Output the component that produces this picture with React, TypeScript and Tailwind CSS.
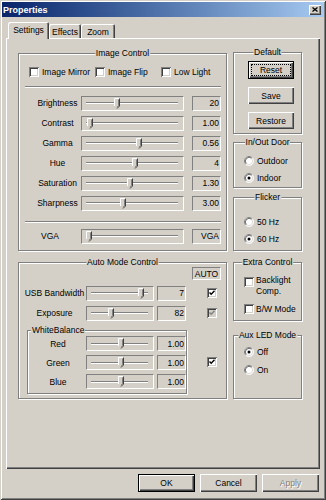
import React from 'react'

type Kids = { children?: React.ReactNode }

function Group({ title, left, className = '', children }: { title: string; left?: boolean; className?: string } & Kids) {
  return (
    <div className={`relative shrink-0 border border-[#808080] shadow-[inset_1px_1px_0_#fff,1px_1px_0_#fff] ${className}`}>
      <span
        className={`absolute top-[-6px] bg-[#d4d0c8] px-[1px] leading-[10px] whitespace-nowrap ${
          left ? 'left-[3px]' : 'left-1/2 -translate-x-1/2'
        }`}
      >
        {title}
      </span>
      {children}
    </div>
  )
}

function Check({ checked, disabled, className = '' }: { checked?: boolean; disabled?: boolean; className?: string }) {
  return (
    <div
      className={`w-[10px] h-[10px] shrink-0 flex items-center justify-center shadow-[inset_1px_1px_0_#808080,inset_-1px_-1px_0_#fff,inset_2px_2px_0_#404040,inset_-2px_-2px_0_#d4d0c8] ${
        disabled ? 'bg-[#d4d0c8]' : 'bg-white'
      } ${className}`}
    >
      {checked && (
        <svg width="6" height="6" viewBox="0 0 6 6">
          <path d="M0.5 2.5 L2.2 4.3 L5.5 0.8" stroke={disabled ? '#808080' : '#000'} strokeWidth="1.4" fill="none" />
        </svg>
      )}
    </div>
  )
}

function Radio({ on }: { on?: boolean }) {
  return (
    <svg width="10" height="10" viewBox="0 0 12 12" className="shrink-0">
      <circle cx="6" cy="6" r="5.5" fill="#fff" />
      <path d="M2.11 9.89 A5.5 5.5 0 0 1 9.89 2.11" stroke="#808080" fill="none" />
      <path d="M9.89 2.11 A5.5 5.5 0 0 1 2.11 9.89" stroke="#fff" fill="none" />
      <path d="M2.82 9.18 A4.5 4.5 0 0 1 9.18 2.82" stroke="#404040" fill="none" />
      <path d="M9.18 2.82 A4.5 4.5 0 0 1 2.82 9.18" stroke="#d4d0c8" fill="none" />
      {on && <circle cx="6" cy="6" r="1.8" fill="#000" />}
    </svg>
  )
}

function Track({ w, at }: { w: string; at: number }) {
  return (
    <div
      className={`relative h-[15px] shrink-0 flex items-center pl-[4px] pr-[5px] border border-t-[#808080] border-l-[#808080] border-b-white border-r-white ${w}`}
    >
      <div className="flex-1 h-[2px] border-t border-t-[#808080] border-b border-b-white" />
      <svg className="absolute top-[1px]" style={{ left: at - 4 }} width="6" height="11" viewBox="0 0 6 11">
        <polygon points="0,0 6,0 6,8 3,11 0,8" fill="#d4d0c8" />
        <polyline points="0.5,8 0.5,0.5 5.5,0.5" stroke="#fff" fill="none" />
        <polyline points="5.5,0.5 5.5,8 3,10.5" stroke="#404040" fill="none" />
        <polyline points="4.5,1.5 4.5,7.6 3,9.2" stroke="#808080" fill="none" />
      </svg>
    </div>
  )
}

function Value({ className = '', children }: { className?: string } & Kids) {
  return (
    <div
      className={`h-[15px] w-[29px] shrink-0 flex items-center justify-end pr-[1px] border border-t-[#808080] border-l-[#808080] border-b-white border-r-white ${className}`}
    >
      {children}
    </div>
  )
}

function Btn({
  label,
  def,
  focus,
  disabled,
  className = '',
}: {
  label: string
  def?: boolean
  focus?: boolean
  disabled?: boolean
  className?: string
}) {
  return (
    <div
      className={`relative shrink-0 flex items-center justify-center bg-[#d4d0c8] shadow-[inset_1px_1px_0_#fff,inset_-1px_-1px_0_#404040,inset_-2px_-2px_0_#808080] ${
        def ? 'border border-black' : ''
      } ${className}`}
    >
      {focus && <div className="absolute inset-[2px] border border-dotted border-black" />}
      <span className={disabled ? 'text-[#808080] [text-shadow:1px_1px_0_#fff]' : ''}>{label}</span>
    </div>
  )
}

function Rule({ className = '' }: { className?: string }) {
  return <div className={`h-[2px] border-t border-t-[#808080] border-b border-b-white ${className}`} />
}

const sliders = [
  { label: 'Brightness', value: '20', at: 36 },
  { label: 'Contrast', value: '1.00', at: 9 },
  { label: 'Gamma', value: '0.56', at: 58 },
  { label: 'Hue', value: '4', at: 54 },
  { label: 'Saturation', value: '1.30', at: 49 },
  { label: 'Sharpness', value: '3.00', at: 42 },
]

const balance = [
  { label: 'Red', at: 35 },
  { label: 'Green', at: 35 },
  { label: 'Blue', at: 35 },
]

export default function App() {
  return (
    <div className="w-[326px] h-[500px] flex flex-col bg-[#d4d0c8] text-black text-[8.5px] leading-[10px] font-['Liberation_Sans',Arial,sans-serif] shadow-[inset_1px_1px_0_#d4d0c8,inset_-1px_-1px_0_#404040,inset_2px_2px_0_#fff,inset_-2px_-2px_0_#808080]">
      {/* title bar */}
      <div className="mx-[2px] mt-[2px] h-[15px] flex items-center pl-[1px] pr-[3px] bg-linear-to-r from-[#0a246a] to-[#a6caf0]">
        <span className="text-white font-bold text-[9px]">Properties</span>
        <div className="ml-auto w-[12px] h-[10px] flex items-center justify-center bg-[#d4d0c8] shadow-[inset_1px_1px_0_#fff,inset_-1px_-1px_0_#404040,inset_-2px_-2px_0_#808080]">
          <svg width="6" height="5" viewBox="0 0 6 5">
            <path d="M0.5 0.5 L5.5 4.5 M5.5 0.5 L0.5 4.5" stroke="#000" strokeWidth="1.3" />
          </svg>
        </div>
      </div>

      <div className="ml-[6px] w-[314px] mt-[5px] flex flex-col">
        {/* tabs */}
        <div className="flex items-end h-[17px] pl-[2px]">
          <div className="relative z-10 w-[41px] h-[17px] flex items-center justify-center pb-[1px] rounded-t-[2px] bg-[#d4d0c8] shadow-[inset_1px_1px_0_#fff,inset_-1px_0_0_#404040,inset_-2px_0_0_#808080]">
            Settings
          </div>
          <div className="w-[32px] h-[15px] flex items-center justify-center rounded-t-[2px] shadow-[inset_1px_1px_0_#fff,inset_-1px_0_0_#404040,inset_-2px_0_0_#808080]">
            Effects
          </div>
          <div className="w-[34px] h-[15px] flex items-center justify-center rounded-t-[2px] shadow-[inset_1px_1px_0_#fff,inset_-1px_0_0_#404040,inset_-2px_0_0_#808080]">
            Zoom
          </div>
        </div>

        {/* panel */}
        <div className="mt-[-1px] h-[431px] flex items-start pt-[14px] pl-[12px] bg-[#d4d0c8] shadow-[inset_1px_1px_0_#fff,inset_-1px_-1px_0_#404040,inset_-2px_-2px_0_#808080]">
          {/* left column */}
          <div className="flex flex-col w-[209px] mt-[1px]">
            <Group title="Image Control" className="h-[198px]">
              <div className="flex items-center h-[20px] mt-[8px] ml-[10px]">
                <div className="w-[66px] flex items-center">
                  <Check />
                  <span className="ml-[3px]">Image Mirror</span>
                </div>
                <div className="w-[66px] flex items-center">
                  <Check />
                  <span className="ml-[3px]">Image Flip</span>
                </div>
                <div className="flex items-center">
                  <Check />
                  <span className="ml-[3px]">Low Light</span>
                </div>
              </div>
              <Rule className="mt-[4px] ml-[6px] mr-[5px]" />
              <div className="mt-[5px] flex flex-col">
                {sliders.map((s) => (
                  <div key={s.label} className="flex items-center h-[20px]">
                    <span className="ml-[16px] w-[45px] text-center">{s.label}</span>
                    <Track w="w-[103px] ml-[1px]" at={s.at} />
                    <Value className="ml-[8px]">{s.value}</Value>
                  </div>
                ))}
              </div>
              <Rule className="mt-[8px] ml-[6px] mr-[5px]" />
              <div className="flex items-center h-[20px] mt-[3px]">
                <span className="ml-[16px] w-[30px] text-center">VGA</span>
                <Track w="w-[103px] ml-[16px]" at={8} />
                <Value className="ml-[8px]">VGA</Value>
              </div>
            </Group>

            <Group title="Auto Mode Control" className="h-[137px] mt-[11px]">
              <div className="flex justify-end mr-[5px] mt-[4px]">
                <div className="h-[13px] w-[29px] flex items-center justify-center border border-t-[#808080] border-l-[#808080] border-b-white border-r-white">
                  AUTO
                </div>
              </div>
              <div className="flex items-center h-[20px] mt-[3px]">
                <span className="ml-[5px] w-[61px] text-center whitespace-nowrap">USB Bandwidth</span>
                <Track w="w-[68px] ml-[1px]" at={55} />
                <Value className="ml-[3px]">7</Value>
                <Check checked className="ml-[21px]" />
              </div>
              <div className="flex items-center h-[20px]">
                <span className="ml-[5px] w-[61px] text-center">Exposure</span>
                <Track w="w-[68px] ml-[1px]" at={25} />
                <Value className="ml-[3px]">82</Value>
                <Check checked disabled className="ml-[21px]" />
              </div>
              <div className="flex items-center mt-[7px] ml-[8px]">
                <Group title="WhiteBalance" left className="w-[160px] h-[64px]">
                  <div className="flex flex-col pt-[3px]">
                    {balance.map((b) => (
                      <div key={b.label} className="flex items-center h-[19px]">
                        <span className="ml-[2px] w-[56px] text-center">{b.label}</span>
                        <Track w="w-[68px]" at={b.at} />
                        <Value className="ml-[3px]">1.00</Value>
                      </div>
                    ))}
                  </div>
                </Group>
                <Check checked className="ml-[20px]" />
              </div>
            </Group>
          </div>

          {/* right column */}
          <div className="flex flex-col w-[69px] ml-[6px]">
            <Group title="Default" className="h-[82px]">
              <div className="flex flex-col gap-[8px] pt-[8px] pl-[14px]">
                <Btn label="Reset" def focus className="w-[46px] h-[18px]" />
                <Btn label="Save" className="w-[46px] h-[17px]" />
                <Btn label="Restore" className="w-[46px] h-[17px]" />
              </div>
            </Group>

            <Group title="In/Out Door" className="h-[46px] mt-[8px]">
              <div className="flex flex-col pt-[9px] pl-[10px]">
                <div className="flex items-center h-[17px]">
                  <Radio />
                  <span className="ml-[3px]">Outdoor</span>
                </div>
                <div className="flex items-center h-[17px]">
                  <Radio on />
                  <span className="ml-[3px]">Indoor</span>
                </div>
              </div>
            </Group>

            <Group title="Flicker" className="h-[54px] mt-[9px]">
              <div className="flex flex-col pt-[15px] pl-[10px]">
                <div className="flex items-center h-[17px]">
                  <Radio />
                  <span className="ml-[3px]">50 Hz</span>
                </div>
                <div className="flex items-center h-[17px]">
                  <Radio on />
                  <span className="ml-[3px]">60 Hz</span>
                </div>
              </div>
            </Group>

            <Group title="Extra Control" className="h-[59px] mt-[11px]">
              <div className="flex flex-col pt-[12px] pl-[10px]">
                <div className="flex items-start">
                  <Check className="mt-[2px]" />
                  <span className="ml-[2px] leading-[11px]">
                    Backlight
                    <br />
                    Comp.
                  </span>
                </div>
                <div className="flex items-center h-[14px] mt-[5px]">
                  <Check />
                  <span className="ml-[2px]">B/W Mode</span>
                </div>
              </div>
            </Group>

            <Group title="Aux LED Mode" className="h-[64px] mt-[14px]">
              <div className="flex flex-col pt-[7px] pl-[10px]">
                <div className="flex items-center h-[18px]">
                  <Radio on />
                  <span className="ml-[3px]">Off</span>
                </div>
                <div className="flex items-center h-[18px]">
                  <Radio />
                  <span className="ml-[3px]">On</span>
                </div>
              </div>
            </Group>
          </div>
        </div>

        {/* dialog buttons */}
        <div className="flex justify-end gap-[5px] mt-[5px] pr-[1px]">
          <Btn label="OK" def className="w-[57px] h-[18px]" />
          <Btn label="Cancel" className="w-[57px] h-[18px]" />
          <Btn label="Apply" disabled className="w-[57px] h-[18px]" />
        </div>
      </div>
    </div>
  )
}
